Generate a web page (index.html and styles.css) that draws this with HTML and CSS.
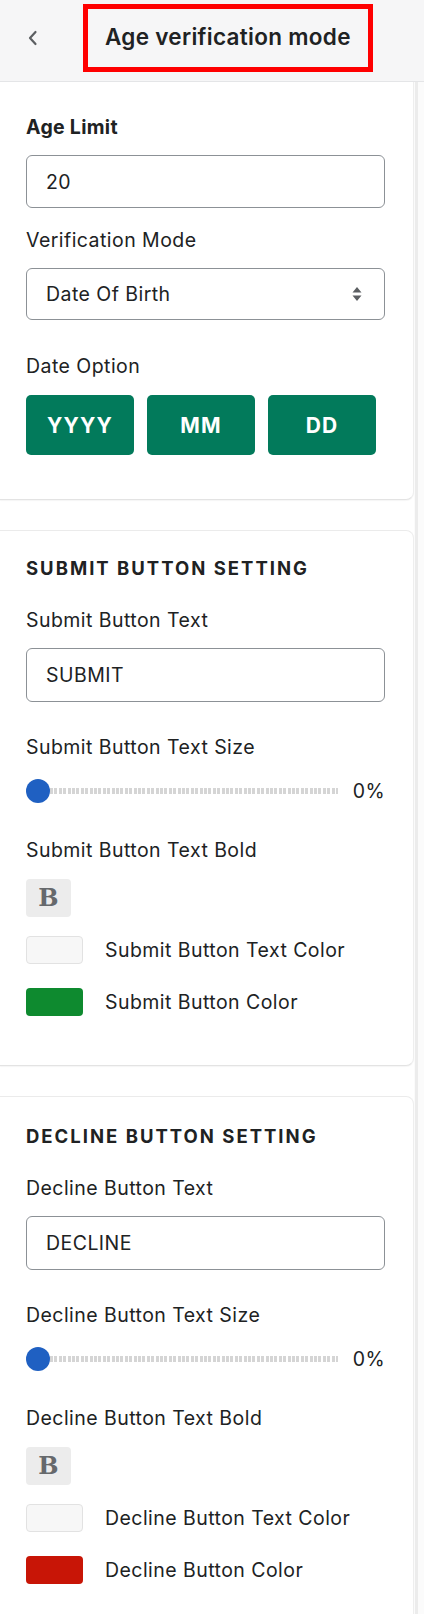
FILE: index.html
```html
<!DOCTYPE html>
<html lang="en">
<head>
<meta charset="utf-8">
<title>Age verification mode</title>
<link rel="stylesheet" href="styles.css">
</head>
<body>
<div class="app">
  <header class="topbar">
    <button class="back" aria-label="Back">
      <svg width="12" height="16" viewBox="0 0 12 16"><path d="M8.5 2 L3 8 L8.5 14" fill="none" stroke="#5c5f62" stroke-width="2.2" stroke-linecap="round" stroke-linejoin="round"/></svg>
    </button>
    <h1 class="title">Age verification mode</h1>
  </header>
  <div class="body">
    <main class="panel">
      <section class="card card-first">
        <div class="label strong l-first">Age Limit</div>
        <div class="field f-a">20</div>
        <div class="label l-after-field">Verification Mode</div>
        <div class="field select f-b">
          <span>Date Of Birth</span>
          <svg class="arrows" width="10" height="16" viewBox="0 0 10 16"><path d="M5 1 L9.5 6.5 H0.5 Z M5 15 L9.5 9.5 H0.5 Z" fill="#5c5f62"/></svg>
        </div>
        <div class="label l-date">Date Option</div>
        <div class="date-buttons">
          <button class="date-btn">YYYY</button>
          <button class="date-btn">MM</button>
          <button class="date-btn">DD</button>
        </div>
      </section>

      <section class="card">
        <h2 class="heading">SUBMIT BUTTON SETTING</h2>
        <div class="label l-head">Submit Button Text</div>
        <div class="field f-c">SUBMIT</div>
        <div class="label l-after-field2">Submit Button Text Size</div>
        <div class="slider">
          <span class="thumb"></span>
          <span class="track"></span>
          <span class="value">0%</span>
        </div>
        <div class="label l-after-slider">Submit Button Text Bold</div>
        <button class="bold-btn">B</button>
        <div class="color-row cr-1"><span class="swatch swatch-light"></span><span class="color-label">Submit Button Text Color</span></div>
        <div class="color-row cr-2"><span class="swatch swatch-green"></span><span class="color-label">Submit Button Color</span></div>
      </section>

      <section class="card card-last">
        <h2 class="heading">DECLINE BUTTON SETTING</h2>
        <div class="label l-head">Decline Button Text</div>
        <div class="field f-c">DECLINE</div>
        <div class="label l-after-field2">Decline Button Text Size</div>
        <div class="slider">
          <span class="thumb"></span>
          <span class="track"></span>
          <span class="value">0%</span>
        </div>
        <div class="label l-after-slider">Decline Button Text Bold</div>
        <button class="bold-btn">B</button>
        <div class="color-row cr-1"><span class="swatch swatch-light"></span><span class="color-label">Decline Button Text Color</span></div>
        <div class="color-row cr-2"><span class="swatch swatch-red"></span><span class="color-label">Decline Button Color</span></div>
      </section>
    </main>
    <div class="scrollbar"><div class="scroll-track"></div></div>
  </div>
</div>
</body>
</html>
```

FILE: styles.css
```css
* { box-sizing: border-box; }
html, body {
  margin: 0;
  padding: 0;
  background: #ffffff;
}
body {
  font-family: Inter, "Noto Sans", "Liberation Sans", sans-serif;
  color: #202223;
  width: 424px;
  overflow: hidden;
}
.app {
  display: flex;
  flex-direction: column;
  width: 424px;
}
.topbar {
  height: 82px;
  background: #f6f6f7;
  border-bottom: 1px solid #e4e5e7;
  display: flex;
  align-items: center;
  padding-left: 22px;
}
.back {
  width: 22px;
  height: 28px;
  border: 0;
  background: transparent;
  padding: 0;
  display: flex;
  align-items: center;
  justify-content: center;
  margin-top: -6px;
}
.title {
  margin: -6px 0 0 39px;
  width: 290px;
  height: 68px;
  border: 5px solid #ff0000;
  font-size: 22.5px;
  font-weight: 600;
  letter-spacing: 0.3px;
  color: #202223;
  display: flex;
  align-items: center;
  padding-left: 17px;
  padding-bottom: 2px;
  white-space: nowrap;
}
.body {
  display: flex;
}
.panel {
  width: 414px;
  display: flex;
  flex-direction: column;
  gap: 30px;
}
.scrollbar {
  flex: 1;
  display: flex;
  padding-left: 1px;
  background: #fbfbfb;
}
.scroll-track {
  width: 3px;
  background: #ececec;
}
.card {
  background: #fff;
  border-top: 1px solid #ebebeb;
  border-bottom: 1px solid #e3e3e3;
  border-right: 1px solid #eeeeee;
  border-radius: 0 8px 8px 0;
  padding: 25px 28px 49px 26px;
  display: flex;
  flex-direction: column;
  align-items: flex-start;
  box-shadow: 0 1px 1px rgba(0,0,0,0.04);
}
.card-first {
  border-top: 0;
  border-radius: 0 0 8px 0;
  padding-top: 33px;
  padding-bottom: 44px;
}
.card-last {
  padding-top: 27px;
  padding-bottom: 60px;
}
.label {
  font-size: 19.5px;
  line-height: 24px;
  font-weight: 400;
  letter-spacing: 0.45px;
  color: #202223;
  white-space: nowrap;
}
.strong { font-weight: 700; letter-spacing: 0.3px; }
.heading {
  margin: 0;
  font-size: 18.5px;
  line-height: 24px;
  font-weight: 700;
  letter-spacing: 2px;
  color: #202223;
  white-space: nowrap;
}
.field {
  width: 359px;
  height: 53px;
  border: 1px solid #8c9196;
  border-radius: 6px;
  display: flex;
  align-items: center;
  padding-left: 19px;
  font-size: 19.5px;
  letter-spacing: 0.45px;
  color: #202223;
  background: #fff;
}
.f-a { margin-top: 16px; }
.l-after-field { margin-top: 20px; }
.f-b { margin-top: 16px; height: 52px; justify-content: space-between; padding-right: 22px; }
.l-date { margin-top: 34px; }
.l-head { margin-top: 28px; }
.f-c { margin-top: 16px; height: 54px; }
.l-after-field2 { margin-top: 33px; }
.l-after-slider { margin-top: 35px; }

.date-buttons {
  margin-top: 17px;
  display: flex;
  gap: 13px;
}
.date-btn {
  width: 108px;
  height: 60px;
  border: 0;
  border-radius: 5px;
  background: #027a5b;
  color: #fff;
  font-family: Inter, "Noto Sans", "Liberation Sans", sans-serif;
  font-size: 21px;
  font-weight: 700;
  letter-spacing: 1.2px;
  padding: 0;
}

.slider {
  margin-top: 20px;
  width: 359px;
  height: 24px;
  display: flex;
  align-items: center;
}
.thumb {
  width: 24px;
  height: 24px;
  border-radius: 50%;
  background: #1f60c2;
  flex: none;
}
.track {
  width: 288px;
  height: 6px;
  background: repeating-linear-gradient(90deg, #d5d5d5 0 3px, transparent 3px 4.4px);
  flex: none;
}
.value {
  margin-left: auto;
  font-size: 19.5px;
  letter-spacing: 0.45px;
  line-height: 24px;
  color: #202223;
}

.bold-btn {
  margin-top: 17px;
  width: 45px;
  height: 38px;
  border: 0;
  border-radius: 4px;
  background: #ececec;
  color: #66696c;
  font-family: "DejaVu Serif", "Liberation Serif", serif;
  font-weight: 700;
  font-size: 24px;
  line-height: 38px;
  padding: 0;
}
.color-row {
  display: flex;
  align-items: center;
  gap: 22px;
}
.cr-1 { margin-top: 19px; }
.cr-2 { margin-top: 24px; }
.swatch {
  width: 57px;
  height: 28px;
  border-radius: 4px;
  flex: none;
}
.swatch-light { background: #f7f7f7; border: 1px solid #e2e2e2; }
.swatch-green { background: #0e8a2f; }
.swatch-red { background: #c81506; }
.color-label {
  font-size: 19.5px;
  letter-spacing: 0.45px;
  line-height: 24px;
  color: #202223;
  white-space: nowrap;
}
```
